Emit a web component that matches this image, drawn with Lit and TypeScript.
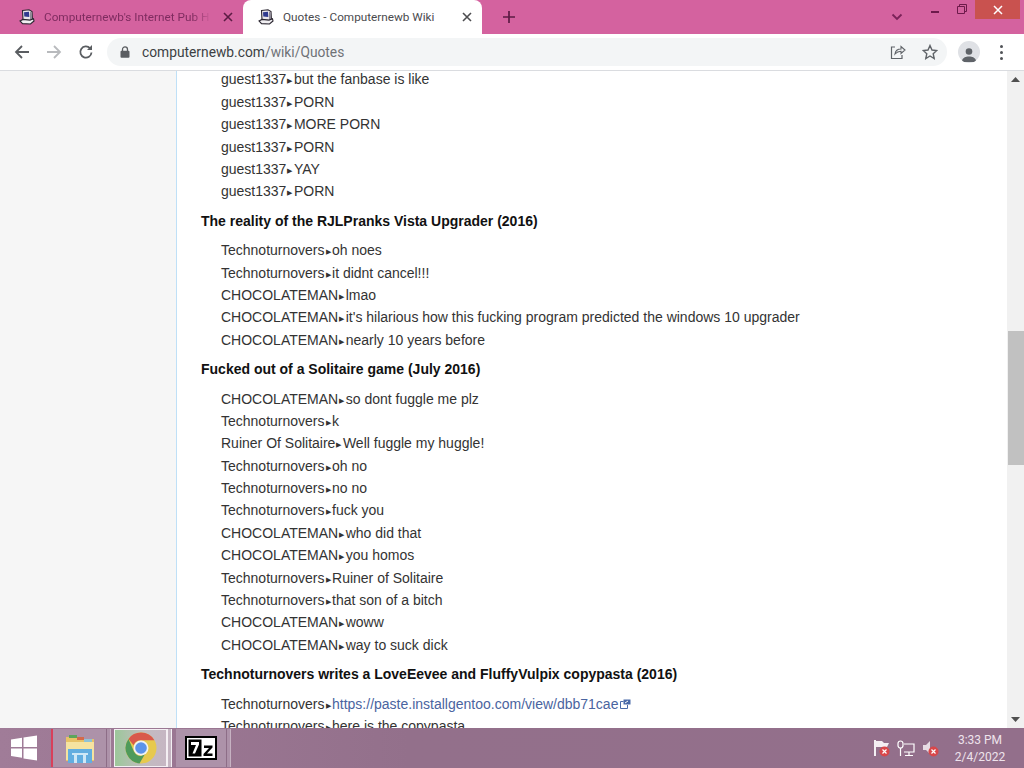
import { LitElement, html, css, svg } from "lit";
import { customElement } from "lit/decorators.js";

type Row = [string, string, string?];
type Block = { h?: string; rows: Row[] };

const G = "guest1337", T = "Technoturnovers", C = "CHOCOLATEMAN", R = "Ruiner Of Solitaire";
const blocks: Block[] = [
  { rows: [[G, "but the fanbase is like"], [G, "PORN"], [G, "MORE PORN"], [G, "PORN"], [G, "YAY"], [G, "PORN"]] },
  { h: "The reality of the RJLPranks Vista Upgrader (2016)", rows: [[T, "oh noes"], [T, "it didnt cancel!!!"], [C, "lmao"], [C, "it's hilarious how this fucking program predicted the windows 10 upgrader"], [C, "nearly 10 years before"]] },
  { h: "Fucked out of a Solitaire game (July 2016)", rows: [[C, "so dont fuggle me plz"], [T, "k"], [R, "Well fuggle my huggle!"], [T, "oh no"], [T, "no no"], [T, "fuck you"], [C, "who did that"], [C, "you homos"], [T, "Ruiner of Solitaire"], [T, "that son of a bitch"], [C, "woww"], [C, "way to suck dick"]] },
  { h: "Technoturnovers writes a LoveEevee and FluffyVulpix copypasta (2016)", rows: [[T, "https://paste.installgentoo.com/view/dbb71cae", "link"], [T, "here is the copypasta"]] },
];

const favicon = svg`<svg class="fav" viewBox="0 0 16 16" width="16" height="16">
  <path d="M3.500 1.500L10 .8l3 1.700.4 7.500-2.400 1.600-7 -.8z" fill="#e9e6ea" stroke="#2a2630" stroke-width="1.100"/>
  <path d="M5 3.200l5-.5.300 5.300-5 -.4z" fill="#2f3a8f"/>
  <path d="M11 3l2 .2v6.500l-2 1.200z" fill="#8f8a96"/>
  <path d="M1 12l3-1.600 7 .7 3.500-1.300L15 12l-3.500 3-8-.4z" fill="#f1eff2" stroke="#2a2630" stroke-width="1.100"/>
</svg>`;

@customElement("app-root")
export class AppRoot extends LitElement {
  static styles = css`
    :host { display: block; width: 1024px; height: 768px; overflow: hidden; font-family: "Liberation Sans", Arial, sans-serif; }
    .win { display: flex; flex-direction: column; width: 1024px; height: 768px; }

    .tabs { flex: none; height: 34px; background: #d4629f; display: flex; align-items: stretch; font-family: Roboto, "Noto Sans", sans-serif; font-size: 11.750px; }
    .tab { padding-left: 19px; display: flex; align-items: center; box-sizing: border-box; color: #7f2c60; flex: none; height: 34px; }
    .tab.first { width: 243px; }
    .tab.active { width: 239px; background: #fff; color: #4a4a4e; border-radius: 8px 8px 0 0; padding-left: 15px; }
    .tab .fav { flex: none; margin-right: 9px; }
    .tab .t { flex: 1; white-space: nowrap; overflow: hidden; }
    .tab.first .t { -webkit-mask-image: linear-gradient(90deg, #000 88%, transparent); mask-image: linear-gradient(90deg, #000 88%, transparent); }
    .x { flex: none; margin: 0 9px 0 10px; width: 12px; height: 12px; display: block; }
    .plus { flex: none; margin: 11px 0 0 21px; width: 12px; height: 12px; }
    .spring { flex: 1; }
    .chev { flex: none; margin: 13px 28px 0 0; width: 12px; height: 8px; }
    .min { flex: none; width: 8px; height: 2px; background: #6d1a4b; margin: 11px 18px 0 0; }
    .rest { flex: none; width: 10px; height: 10px; margin: 4px 8px 0 0; }
    .close { flex: none; width: 45px; height: 19px; margin-right: 4px; background: #c9524f; display: flex; align-items: center; justify-content: center; }

    .bar { flex: none; height: 36px; background: #fff; border-bottom: 1px solid #dadce0; display: flex; align-items: center; }
    .nav { flex: none; width: 18px; height: 18px; margin-left: 13px; }
    .nav + .nav { margin-left: 14px; }
    .omni { flex: none; width: 840px; height: 28px; margin-left: 12px; background: #f3f5f6; border-radius: 14px; display: flex; align-items: center; font-family: Roboto, "Noto Sans", sans-serif; font-size: 13.800px; color: #3c3f43; }
    .lock { flex: none; margin: 0 12px 0 13px; }
    .url { flex: 1; white-space: nowrap; }
    .url span { color: #6f7276; }
    .omni svg.act { flex: none; margin-right: 16px; }
    .omni svg.act:last-child { margin-right: 9px; }
    .avatar { flex: none; width: 22px; height: 22px; margin-left: 11px; border-radius: 50%; background: #dfe1e5; display: flex; align-items: flex-end; justify-content: center; overflow: hidden; }
    .dots { flex: none; margin-left: 20px; width: 4px; display: flex; flex-direction: column; gap: 3px; }
    .dots i { display: block; width: 3px; height: 3px; border-radius: 50%; background: #505357; }

    .page { flex: 1; min-height: 0; display: flex; overflow: hidden; background: #f6f6f6; }
    .side { flex: none; width: 176px; }
    .main { flex: none; width: 831px; height: 100%; box-sizing: border-box; background: #fff; border-left: 1px solid #bfe0f7; padding-left: 24px; overflow: hidden; font-size: 14px; line-height: 22.4px; color: #333; }
    .inner { margin-top: -2.600px; }
    h3 { margin: 7px 0 7px; font-size: 14px; line-height: 22.4px; font-weight: bold; color: #111; }
    .row { margin-left: 20px; white-space: nowrap; height: 22.4px; }
    .arr { font-size: 7px; vertical-align: 1px; margin: 0 1.500px 0 1px; color: #333; }
    a { color: #4a64a0; text-decoration: none; }
    .ext { margin-left: 2px; vertical-align: 0; }

    .sb { flex: none; width: 17px; background: #f1f1f1; display: flex; flex-direction: column; align-items: stretch; }
    .up, .down { flex: none; height: 17px; display: flex; align-items: center; justify-content: center; }
    .thumb { flex: none; height: 134px; margin: 243px 0 0 1px; background: #c1c1c1; }
    .sb .g { flex: 1; }

    .task { flex: none; height: 40px; background: linear-gradient(90deg, #a07c98, #93708b 40%, #936f8b); display: flex; align-items: stretch; }
    .start { flex: none; width: 48px; padding-right: 3px; display: flex; align-items: center; justify-content: center; }
    .item { flex: none; height: 38px; margin-top: 1px; box-sizing: border-box; display: flex; align-items: center; justify-content: center; background: #ad92a9; }
    .item.e { width: 55px; border-left: 2px solid #d9405a; padding-top: 2px; }
    .item.c { width: 53px; margin-left: 3px; background: linear-gradient(90deg, #9cc79a, #c2bcc0 55%, #c6b6c3); border: 1px solid #f4eff3; }
    .item.z { width: 50px; margin-left: 4px; }
    .edge { flex: none; width: 5px; height: 38px; margin-top: 1px; box-sizing: border-box; background: #ad92a9; border-left: 1px solid #8d6d87; border-right: 1px solid #c6b2c2; }
    .edge.on { border-left-color: #f4eff3; border-right-color: #f4eff3; background: #c6b6c3; }
    .tray { flex: none; display: flex; align-items: center; gap: 7px; margin-right: 12px; }
    .clock { flex: none; width: 58px; margin-right: 15px; text-align: center; font-family: Roboto, "Noto Sans", sans-serif; font-size: 12px; line-height: 17px; color: #eee3ec; padding-top: 4px; box-sizing: border-box; }
  `;

  private tabX(c: string) {
    return svg`<svg class="x" viewBox="0 0 12 12"><path d="M2 2l8 8M10 2l-8 8" stroke="${c}" stroke-width="1.600" fill="none"/></svg>`;
  }

  render() {
    return html`<div class="win">
      <div class="tabs">
        <div class="tab first">${favicon}<span class="t">Computernewb's Internet Pub H</span>${this.tabX("#5c1c44")}</div>
        <div class="tab active">${favicon}<span class="t">Quotes - Computernewb Wiki</span>${this.tabX("#4d4d50")}</div>
        <svg class="plus" viewBox="0 0 12 12"><path d="M6 0v12M0 6h12" stroke="#5c1c44" stroke-width="1.700"/></svg>
        <div class="spring"></div>
        <svg class="chev" viewBox="0 0 12 8"><path d="M1.500 1.500L6 6l4.500-4.500" stroke="#7a2258" stroke-width="1.800" fill="none"/></svg>
        <div class="min"></div>
        <svg class="rest" viewBox="0 0 10 10"><path d="M2.500 2.500V.5h7v7h-2M.5 2.500h7v7h-7z" stroke="#6d1a4b" fill="none"/></svg>
        <div class="close"><svg width="10" height="10" viewBox="0 0 10 10"><path d="M1 1l8 8M9 1l-8 8" stroke="#fff" stroke-width="1.500"/></svg></div>
      </div>

      <div class="bar">
        <svg class="nav" viewBox="0 0 18 18"><path d="M16 9H3M9 3L3 9l6 6" stroke="#5a5d61" stroke-width="1.800" fill="none"/></svg>
        <svg class="nav" viewBox="0 0 18 18"><path d="M2 9h13M9 3l6 6-6 6" stroke="#b8babd" stroke-width="1.800" fill="none"/></svg>
        <svg class="nav" viewBox="0 0 18 18"><path d="M14.500 9.500a5.600 5.600 0 1 1-1.400-4.200" stroke="#5a5d61" stroke-width="1.800" fill="none"/><path d="M15 2v5h-5z" fill="#5a5d61"/></svg>
        <div class="omni">
          <svg class="lock" width="10" height="12" viewBox="0 0 10 12"><path d="M2.500 5V3.400a2.500 2.500 0 0 1 5 0V5" stroke="#5a5d61" stroke-width="1.300" fill="none"/><rect x=".5" y="4.700" width="9" height="7" rx="1" fill="#5a5d61"/></svg>
          <div class="url">computernewb.com<span>/wiki/Quotes</span></div>
          <svg class="act" width="16" height="16" viewBox="0 0 16 16"><path d="M5 3H1.500v11.500H12V11" stroke="#5f6368" stroke-width="1.200" fill="none"/><path d="M5 10c.4-3 2.600-5 6-5V2.500L15 6l-4 3.500V7.300c-2.500 0-4.500 1-6 2.700z" stroke="#5f6368" stroke-width="1.100" fill="none"/></svg>
          <svg class="act" width="16" height="16" viewBox="0 0 16 16"><path d="M8 1.500l2 4.500 4.800.5-3.600 3.200 1 4.800L8 12l-4.200 2.500 1-4.800L1.200 6.500 6 6z" stroke="#5f6368" stroke-width="1.400" fill="none"/></svg>
        </div>
        <div class="avatar"><svg width="16" height="17" viewBox="0 0 16 17"><circle cx="8" cy="5.500" r="3.300" fill="#5f6368"/><path d="M1 15c0-3.200 4-4.500 7-4.500s7 1.300 7 4.500v1H1z" fill="#5f6368"/></svg></div>
        <div class="dots"><i></i><i></i><i></i></div>
      </div>

      <div class="page">
        <div class="side"></div>
        <div class="main"><div class="inner">
          ${blocks.map((b) => html`
            ${b.h ? html`<h3>${b.h}</h3>` : ""}
            ${b.rows.map((r) => html`<div class="row">${r[0]}<span class="arr">▶</span>${r[2] ? html`<a>${r[1]}</a><svg class="ext" width="11" height="10" viewBox="0 0 11 10"><path d="M3.500 2.500H.5v7h7V6" stroke="#4a6aa8" fill="none"/><path d="M3.500.5h7v5h-7z" fill="#4a6aa8"/><path d="M5 4l3-2" stroke="#fff"/></svg>` : r[1]}</div>`)}
          `)}
        </div></div>
        <div class="sb">
          <div class="up"><svg width="9" height="5" viewBox="0 0 9 5"><path d="M4.500 0L9 5H0z" fill="#505050"/></svg></div>
          <div class="thumb"></div>
          <div class="g"></div>
          <div class="down"><svg width="9" height="5" viewBox="0 0 9 5"><path d="M4.500 5L9 0H0z" fill="#505050"/></svg></div>
        </div>
      </div>

      <div class="task">
        <div class="start"><svg width="28" height="26" viewBox="0 0 28 26"><path d="M1 4.500l11-1.700V12H1zM13.500 2.600L27 .5V12H13.500zM1 13.500h11v9.300L1 21zM13.500 13.500H27v12l-13.500-2z" fill="#fff"/></svg></div>
        <div class="item e"><svg width="32" height="30" viewBox="0 0 32 30">
          <path d="M2 3h11l2 2h15v22H2z" fill="#e8c266"/><path d="M2 8h28v18H2z" fill="#f6e3a0"/>
          <rect x="5" y="1" width="8" height="3" fill="#5ca55c"/><rect x="13" y="3" width="7" height="3" fill="#d46a4a"/><rect x="20" y="5" width="8" height="3" fill="#8fc3d6"/>
          <path d="M4 15h24v14H4z" fill="#63aee0"/><path d="M8 19h16v2H8zM10 21h3v8h-3zM19 21h3v8h-3z" fill="#cfe8f6"/>
        </svg></div>
        <div class="edge"></div>
        <div class="item c"><svg width="32" height="32" viewBox="0 0 32 32">
          <circle cx="16" cy="16" r="15.500" fill="#e6c94e"/>
          <path d="M16 .5A15.500 15.500 0 0 1 29.400 8.200H16a8 8 0 0 0-7.400 5L3.500 6.900A15.500 15.500 0 0 1 16 .5z" fill="#d9584c"/>
          <path d="M3.500 6.900A15.500 15.500 0 0 0 14.500 31.400L20 22 16 24a8 8 0 0 1-7-4.200z" fill="#4f9a5a"/>
          <circle cx="16" cy="16" r="7.500" fill="#f2f2f2"/><circle cx="16" cy="16" r="5.800" fill="#5d93e8"/>
        </svg></div>
        <div class="edge on"></div>
        <div class="item z"><svg width="32" height="24" viewBox="0 0 32 24"><rect width="32" height="24" fill="#000"/><rect x="2" y="2" width="28" height="20" fill="#fff"/><rect x="3.500" y="3.500" width="13" height="17" fill="#000"/><path d="M6 6h8v2.500l-4 9H7.500l3.500-8.500H6z" fill="#fff"/><path d="M19 9.500h8.500v2L22 17.500h5.500V20H18.500v-2l5.500-6h-5z" fill="#000"/></svg></div>
        <div class="edge"></div>
        <div class="spring"></div>
        <div class="tray">
          <svg width="17" height="18" viewBox="0 0 17 18"><path d="M2 1v16" stroke="#fff" stroke-width="1.800"/><path d="M3 2h6l2 2h5l-2 4H3z" fill="#f4eef2"/><circle cx="11.500" cy="12.500" r="5" fill="#d9474a"/><path d="M9.500 10.500l4 4M13.500 10.500l-4 4" stroke="#fff" stroke-width="1.200"/></svg>
          <svg width="18" height="17" viewBox="0 0 18 17"><rect x="1" y="1" width="5" height="7" rx="2.500" stroke="#fff" stroke-width="1.200" fill="none"/><path d="M3.500 8v8M7 4h10v8H7M12 12v3M8 15.500h8" stroke="#fff" stroke-width="1.200" fill="none"/></svg>
          <svg width="17" height="18" viewBox="0 0 17 18"><path d="M1 6h3l4-4v13l-4-4H1z" fill="#e6dbe3"/><circle cx="11.500" cy="12.500" r="5" fill="#d9474a"/><path d="M9.500 10.500l4 4M13.500 10.500l-4 4" stroke="#fff" stroke-width="1.200"/></svg>
        </div>
        <div class="clock">3:33 PM<br />2/4/2022</div>
      </div>
    </div>`;
  }
}
